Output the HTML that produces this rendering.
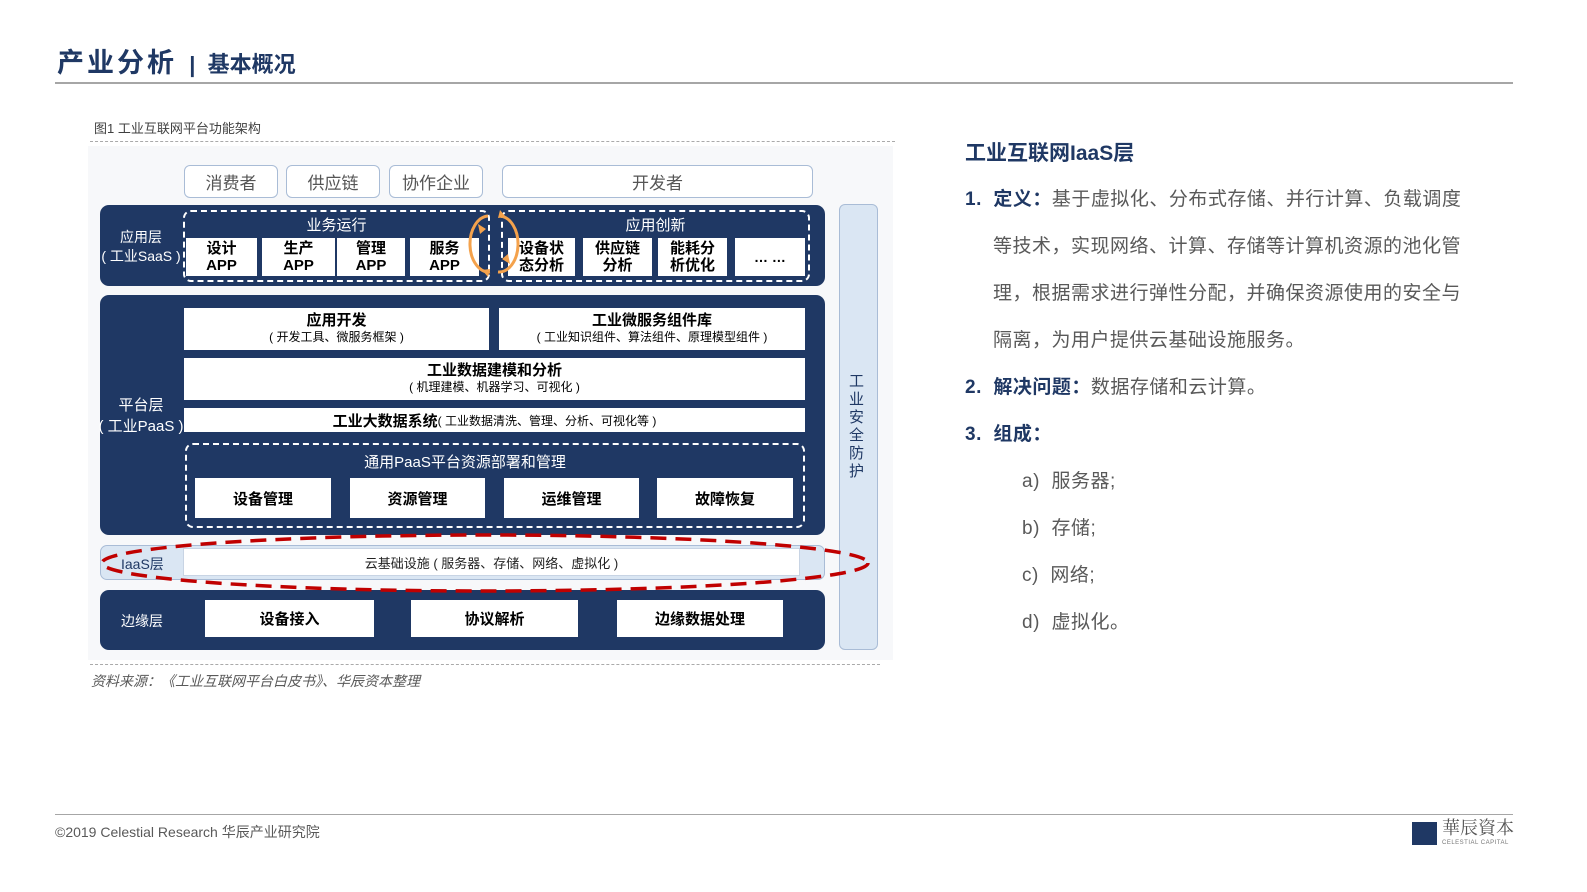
<!DOCTYPE html>
<html><head><meta charset="utf-8">
<style>
*{margin:0;padding:0;box-sizing:border-box}
body{width:1587px;height:892px;background:#fff;position:relative;overflow:hidden;font-family:"Liberation Sans","Noto Sans CJK SC",sans-serif}
.a{position:absolute}
.c{display:flex;align-items:center;justify-content:center;text-align:center}
.nv{background:#1f3864;border-radius:9px}
.w{background:#fff;color:#000;font-weight:bold}
.tb{background:#fff;border:1.5px solid #a9bcd6;border-radius:6px;color:#555;font-size:17px}
.dash{border:2px dashed #fff;border-radius:8px}
.rt{font-size:19px;color:#595959;letter-spacing:0.5px}
.rt b{color:#1f3864}
.num{color:#1f3864;font-weight:bold}
</style></head><body>
<div class="a" style="left:57px;top:41px;font-size:27px;font-weight:bold;color:#1f3864;letter-spacing:3px;white-space:nowrap">产业分析<span style="font-size:22px;letter-spacing:0">&nbsp;&nbsp;|&nbsp;&nbsp;</span><span style="font-size:22px;letter-spacing:0">基本概况</span></div>
<div class="a" style="left:55px;top:82px;width:1458px;height:2px;background:#a6a6a6"></div>

<div class="a" style="left:94px;top:118px;font-size:13px;color:#404040">图1 工业互联网平台功能架构</div>
<div class="a" style="left:90px;top:141px;width:805px;border-top:1px dashed #aaa"></div>
<div class="a" style="left:88px;top:146px;width:805px;height:514px;background:#f7f8fa"></div>

<div class="a tb c" style="left:184px;top:165px;width:94px;height:33px">消费者</div>
<div class="a tb c" style="left:286px;top:165px;width:94px;height:33px">供应链</div>
<div class="a tb c" style="left:389px;top:165px;width:94px;height:33px">协作企业</div>
<div class="a tb c" style="left:502px;top:165px;width:311px;height:33px">开发者</div>

<!-- SaaS -->
<div class="a nv" style="left:100px;top:205px;width:725px;height:81px"></div>
<div class="a c" style="left:96px;top:228px;width:90px;font-size:14px;color:#fff;line-height:19px;white-space:nowrap;flex-direction:column"><span>应用层</span><span>( 工业SaaS )</span></div>
<div class="a dash" style="left:183px;top:210px;width:307px;height:72px"></div>
<div class="a dash" style="left:501px;top:210px;width:309px;height:72px"></div>
<div class="a" style="left:183px;top:214px;width:307px;text-align:center;color:#fff;font-size:15px">业务运行</div>
<div class="a" style="left:501px;top:214px;width:309px;text-align:center;color:#fff;font-size:15px">应用创新</div>
<div class="a w c" style="left:186px;top:238px;width:71px;height:38px;font-size:15px;line-height:17px">设计<br>APP</div>
<div class="a w c" style="left:262px;top:238px;width:73px;height:38px;font-size:15px;line-height:17px">生产<br>APP</div>
<div class="a w c" style="left:337px;top:238px;width:68px;height:38px;font-size:15px;line-height:17px">管理<br>APP</div>
<div class="a w c" style="left:410px;top:238px;width:69px;height:38px;font-size:15px;line-height:17px">服务<br>APP</div>
<div class="a w c" style="left:508px;top:238px;width:67px;height:38px;font-size:15px;line-height:17px">设备状<br>态分析</div>
<div class="a w c" style="left:583px;top:238px;width:69px;height:38px;font-size:15px;line-height:17px">供应链<br>分析</div>
<div class="a w c" style="left:658px;top:238px;width:69px;height:38px;font-size:15px;line-height:17px">能耗分<br>析优化</div>
<div class="a w c" style="left:735px;top:238px;width:70px;height:38px;font-size:14px">… …</div>
<svg class="a" style="left:466px;top:206px" width="60" height="75"><path d="M22 10 A19 28 0 0 0 24 66" fill="none" stroke="#f4a24c" stroke-width="3"/><path d="M34 10 A19 28 0 0 1 32 66" fill="none" stroke="#f4a24c" stroke-width="3"/><path d="M14 28 l-2 -10 l8 5 z M42 48 l2 10 l-8 -5z M34 4 l6 7 l-8 1z M22 71 l-6 -7 l8 -1z" fill="#f4a24c"/></svg>

<!-- PaaS -->
<div class="a nv" style="left:100px;top:295px;width:725px;height:240px"></div>
<div class="a c" style="left:96px;top:395px;width:90px;font-size:15px;color:#fff;line-height:21px;white-space:nowrap;flex-direction:column"><span>平台层</span><span>( 工业PaaS )</span></div>
<div class="a w c" style="left:184px;top:308px;width:305px;height:42px;font-size:15px;line-height:17px;flex-direction:column">应用开发<span style="font-weight:normal;font-size:12px">( 开发工具、微服务框架 )</span></div>
<div class="a w c" style="left:499px;top:308px;width:306px;height:42px;font-size:15px;line-height:17px;flex-direction:column">工业微服务组件库<span style="font-weight:normal;font-size:12px">( 工业知识组件、算法组件、原理模型组件 )</span></div>
<div class="a w c" style="left:184px;top:358px;width:621px;height:42px;font-size:15px;line-height:17px;flex-direction:column">工业数据建模和分析<span style="font-weight:normal;font-size:12px">( 机理建模、机器学习、可视化 )</span></div>
<div class="a w c" style="left:184px;top:408px;width:621px;height:24px;font-size:15px">工业大数据系统<span style="font-weight:normal;font-size:12px">( 工业数据清洗、管理、分析、可视化等 )</span></div>
<div class="a dash" style="left:185px;top:443px;width:620px;height:85px"></div>
<div class="a" style="left:185px;top:451px;width:560px;text-align:center;color:#fff;font-size:15px">通用PaaS平台资源部署和管理</div>
<div class="a w c" style="left:195px;top:478px;width:136px;height:40px;font-size:15px">设备管理</div>
<div class="a w c" style="left:350px;top:478px;width:135px;height:40px;font-size:15px">资源管理</div>
<div class="a w c" style="left:504px;top:478px;width:135px;height:40px;font-size:15px">运维管理</div>
<div class="a w c" style="left:657px;top:478px;width:136px;height:40px;font-size:15px">故障恢复</div>

<!-- IaaS -->
<div class="a" style="left:100px;top:545px;width:725px;height:35px;background:#dae6f3;border:1px solid #a9bcd6;border-radius:7px"></div>
<div class="a" style="left:121px;top:554px;font-size:14px;color:#1f3864">IaaS层</div>
<div class="a c" style="left:183px;top:548px;width:617px;height:28px;background:#fff;border:1px solid #c8d4e4;font-size:13px;color:#222">云基础设施 ( 服务器、存储、网络、虚拟化 )</div>

<!-- Edge -->
<div class="a nv" style="left:100px;top:590px;width:725px;height:60px"></div>
<div class="a" style="left:121px;top:611px;font-size:14px;color:#fff">边缘层</div>
<div class="a w c" style="left:205px;top:600px;width:169px;height:37px;font-size:15px">设备接入</div>
<div class="a w c" style="left:411px;top:600px;width:167px;height:37px;font-size:15px">协议解析</div>
<div class="a w c" style="left:617px;top:600px;width:166px;height:37px;font-size:15px">边缘数据处理</div>

<div class="a" style="left:839px;top:204px;width:39px;height:446px;background:#dae6f3;border:1px solid #a9bcd6;border-radius:6px"></div>
<div class="a" style="left:849px;top:373px;width:18px;font-size:15px;line-height:18px;color:#1f3864">工业安全防护</div>

<svg class="a" style="left:95px;top:528px" width="785" height="70"><ellipse cx="390" cy="35" rx="383" ry="28" fill="none" stroke="#c00000" stroke-width="3.5" stroke-dasharray="16 9"/></svg>

<div class="a" style="left:90px;top:664px;width:790px;border-top:1px dashed #aaa"></div>
<div class="a" style="left:91px;top:671px;font-size:14px;color:#595959;font-style:italic">资料来源：《工业互联网平台白皮书》、华辰资本整理</div>

<!-- right text -->
<div class="a" style="left:965px;top:137px;font-size:21px;font-weight:bold;color:#1f3864">工业互联网IaaS层</div>
<div class="a rt" style="left:965px;top:176px;line-height:47px;width:530px">
<div><span class="num">1.&nbsp;&nbsp;</span><b>定义：</b>基于虚拟化、分布式存储、并行计算、负载调度</div>
<div style="padding-left:28px">等技术，实现网络、计算、存储等计算机资源的池化管</div>
<div style="padding-left:28px">理，根据需求进行弹性分配，并确保资源使用的安全与</div>
<div style="padding-left:28px">隔离，为用户提供云基础设施服务。</div>
<div><span class="num">2.&nbsp;&nbsp;</span><b>解决问题：</b>数据存储和云计算。</div>
<div><span class="num">3.&nbsp;&nbsp;</span><b>组成：</b></div>
<div style="padding-left:57px">a)&nbsp;&nbsp;服务器;</div>
<div style="padding-left:57px">b)&nbsp;&nbsp;存储;</div>
<div style="padding-left:57px">c)&nbsp;&nbsp;网络;</div>
<div style="padding-left:57px">d)&nbsp;&nbsp;虚拟化。</div>
</div>

<!-- footer -->
<div class="a" style="left:55px;top:814px;width:1458px;height:1px;background:#a6a6a6"></div>
<div class="a" style="left:55px;top:822px;font-size:14px;color:#595959">©2019 Celestial Research 华辰产业研究院</div>
<div class="a" style="left:1412px;top:822px;width:25px;height:23px;background:#1f3864"></div>
<div class="a" style="left:1442px;top:817px;font-size:18px;color:#555;font-family:'Noto Serif CJK SC',serif;line-height:20px">華辰資本</div>
<div class="a" style="left:1442px;top:840px;font-size:6px;color:#777;letter-spacing:0.5px">CELESTIAL CAPITAL</div>
</body></html>
